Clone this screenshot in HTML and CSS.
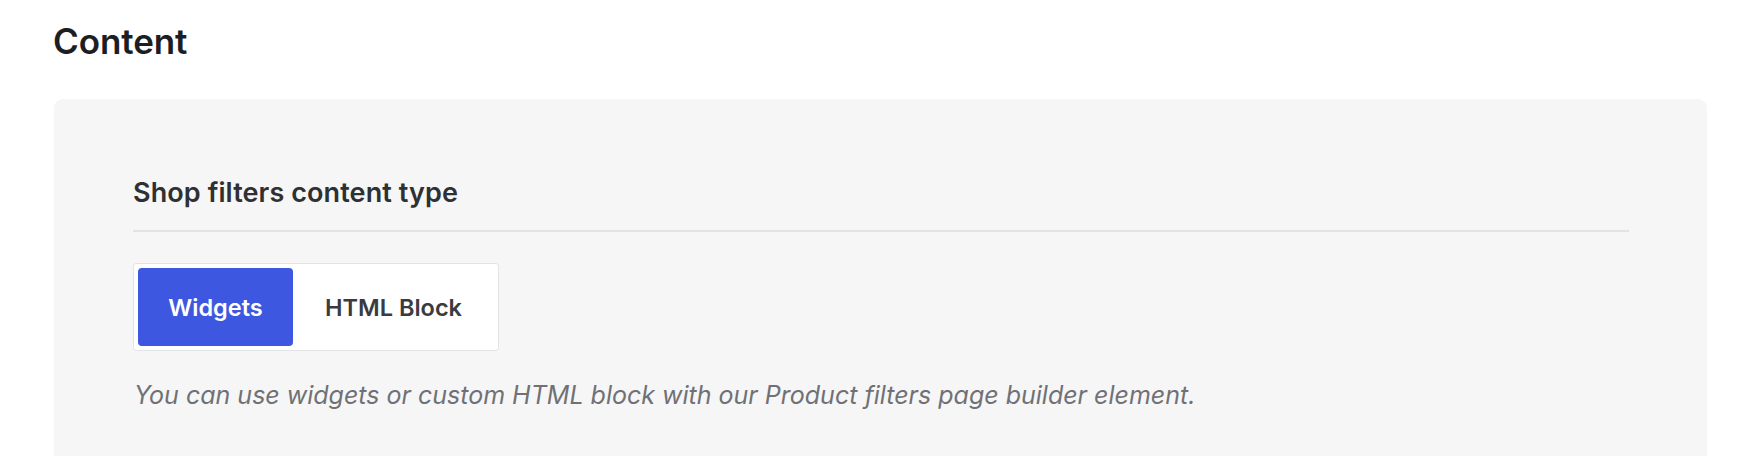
FILE: index.html
```html
<!DOCTYPE html>
<html lang="en">
<head>
<meta charset="utf-8">
<title>Content</title>
<link rel="stylesheet" href="styles.css">
</head>
<body>
<main class="page">
  <h1 class="page-title">Content</h1>
  <section class="panel">
    <div class="field">
      <h2 class="field-title">Shop filters content type</h2>
      <div class="toggle">
        <button class="toggle-btn is-active" type="button">Widgets</button>
        <button class="toggle-btn" type="button">HTML Block</button>
      </div>
      <p class="field-desc">You can use widgets or custom HTML block with our Product filters page builder element.</p>
    </div>
  </section>
</main>
</body>
</html>
```
FILE: styles.css
```css
* { box-sizing: border-box; }
html, body { margin: 0; padding: 0; background: #ffffff; }
body {
  font-family: Inter, "Noto Sans", "Liberation Sans", sans-serif;
  color: #1f2024;
}
.page {
  padding: 21px 39px 0 54px;
}
.page-title {
  margin: 0 0 0 -1px;
  font-size: 35px;
  line-height: 41px;
  font-weight: 600;
  color: #1d1e23;
  letter-spacing: -0.1px;
}
.panel {
  margin-top: 37px;
  background: #f6f6f6;
  border-radius: 9px;
  padding: 79px 78px 80px 79px;
  min-height: 400px;
}
.field-title {
  margin: 0;
  font-size: 27px;
  line-height: 30px;
  font-weight: 600;
  color: #2f3033;
  padding-bottom: 22px;
  border-bottom: 2px solid #e3e3e3;
  letter-spacing: 0.1px;
}
.toggle {
  display: inline-flex;
  margin-top: 31px;
  padding: 4px;
  background: #ffffff;
  border: 1px solid #e4e4e4;
  border-radius: 3px;
}
.toggle-btn {
  font-family: inherit;
  font-size: 23.5px;
  font-weight: 600;
  height: 78px;
  border: 0;
  background: transparent;
  color: #3a3b40;
  border-radius: 4px;
  padding: 0;
  cursor: pointer;
}
.toggle-btn.is-active {
  background: #3d57e1;
  color: #ffffff;
  width: 155px;
}
.toggle-btn:not(.is-active) {
  width: 201px;
}
.field-desc {
  margin: 26px 0 0 1px;
  font-size: 25px;
  line-height: 36px;
  font-style: italic;
  color: #707176;
}
```
